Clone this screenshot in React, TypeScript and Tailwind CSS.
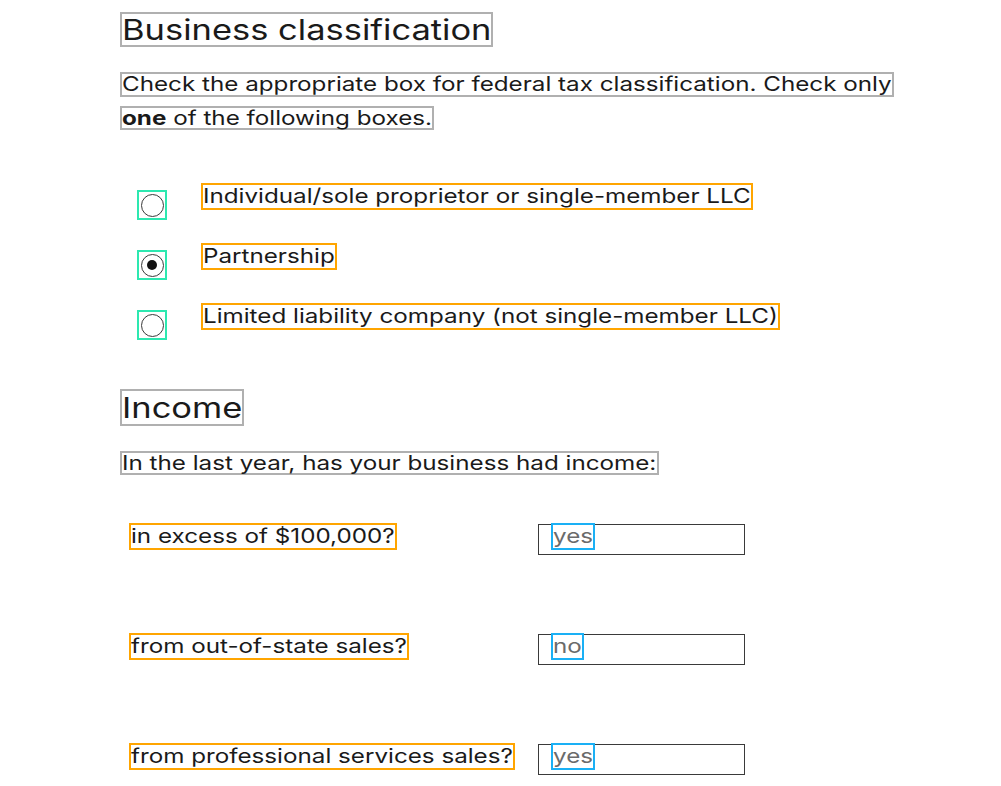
import React, { useLayoutEffect, useRef, useState } from "react"

const options = [
  { label: "Individual/sole proprietor or single-member LLC", checked: false },
  { label: "Partnership", checked: true },
  { label: "Limited liability company (not single-member LLC)", checked: false },
]

const questions = [
  { label: "in excess of $100,000?", value: "yes" },
  { label: "from out-of-state sales?", value: "no" },
  { label: "from professional services sales?", value: "yes" },
]

// text in the source is set wide; scale it and let the outlined box follow the scaled width
function Wide({ children, className = "" }: { children: React.ReactNode; className?: string }) {
  const inner = useRef<HTMLSpanElement>(null)
  const [w, setW] = useState<number | undefined>(undefined)

  useLayoutEffect(() => {
    if (inner.current) setW(inner.current.offsetWidth * 1.21)
  }, [])

  return (
    <span className={`inline-block overflow-visible whitespace-nowrap ${className}`} style={{ width: w }}>
      <span ref={inner} className="inline-block origin-left scale-x-[1.21]">
        {children}
      </span>
    </span>
  )
}

function Radio({ checked }: { checked: boolean }) {
  return (
    <span className="mt-[7px] flex h-[26px] w-[26px] shrink-0 items-center justify-center outline-2 outline-[#2de8b0]">
      <span className="flex h-[23px] w-[23px] items-center justify-center rounded-full border-[1.5px] border-[#3a3a3a]">
        {checked && <span className="h-[10px] w-[10px] rounded-full bg-[#111]" />}
      </span>
    </span>
  )
}

export default function App() {
  return (
    <div className="min-h-[786px] bg-white pl-[122px] pt-[14px] font-['Inter',sans-serif] text-[#1a1a1a]">
      <h1 className="text-[28.5px] leading-[31px]">
        <Wide className="outline-2 outline-[#b0b0b0]">Business classification</Wide>
      </h1>
      <div className="mt-[29px] text-[20px]">
        <div className="leading-[21px]">
          <Wide className="outline-2 outline-[#b0b0b0]">
            Check the appropriate box for federal tax classification. Check only
          </Wide>
        </div>
        <div className="mt-[13px] leading-[20px]">
          <Wide className="outline-2 outline-[#b0b0b0]">
            <strong className="font-bold">one</strong> of the following boxes.
          </Wide>
        </div>
      </div>

      <div className="mt-[57px] flex flex-col gap-[27px] pl-[17px]">
        {options.map((o) => (
          <div key={o.label} className="flex items-start gap-[38px]">
            <Radio checked={o.checked} />
            <Wide className="text-[20px] leading-[23px] outline-2 outline-[#ffa500]">{o.label}</Wide>
          </div>
        ))}
      </div>

      <h2 className="mt-[53px] text-[28.5px] leading-[33px]">
        <Wide className="outline-2 outline-[#b0b0b0]">Income</Wide>
      </h2>
      <p className="mt-[29px] text-[20px] leading-[20px]">
        <Wide className="outline-2 outline-[#b0b0b0]">In the last year, has your business had income:</Wide>
      </p>

      <div className="mt-[52px] flex flex-col gap-[80px] pl-[9px]">
        {questions.map((q) => (
          <div key={q.label} className="flex items-start">
            <div className="w-[407px]">
              <Wide className="text-[20px] leading-[23px] outline-2 outline-[#ffa500]">{q.label}</Wide>
            </div>
            <div className="-mt-[1px] flex h-[31px] w-[207px] items-start border-[1.5px] border-[#3a3a3a] pl-[14px]">
              <Wide className="text-[20px] leading-[23px] text-[#6b6b6b] outline-2 outline-[#1ab0f5]">{q.value}</Wide>
            </div>
          </div>
        ))}
      </div>
    </div>
  )
}
